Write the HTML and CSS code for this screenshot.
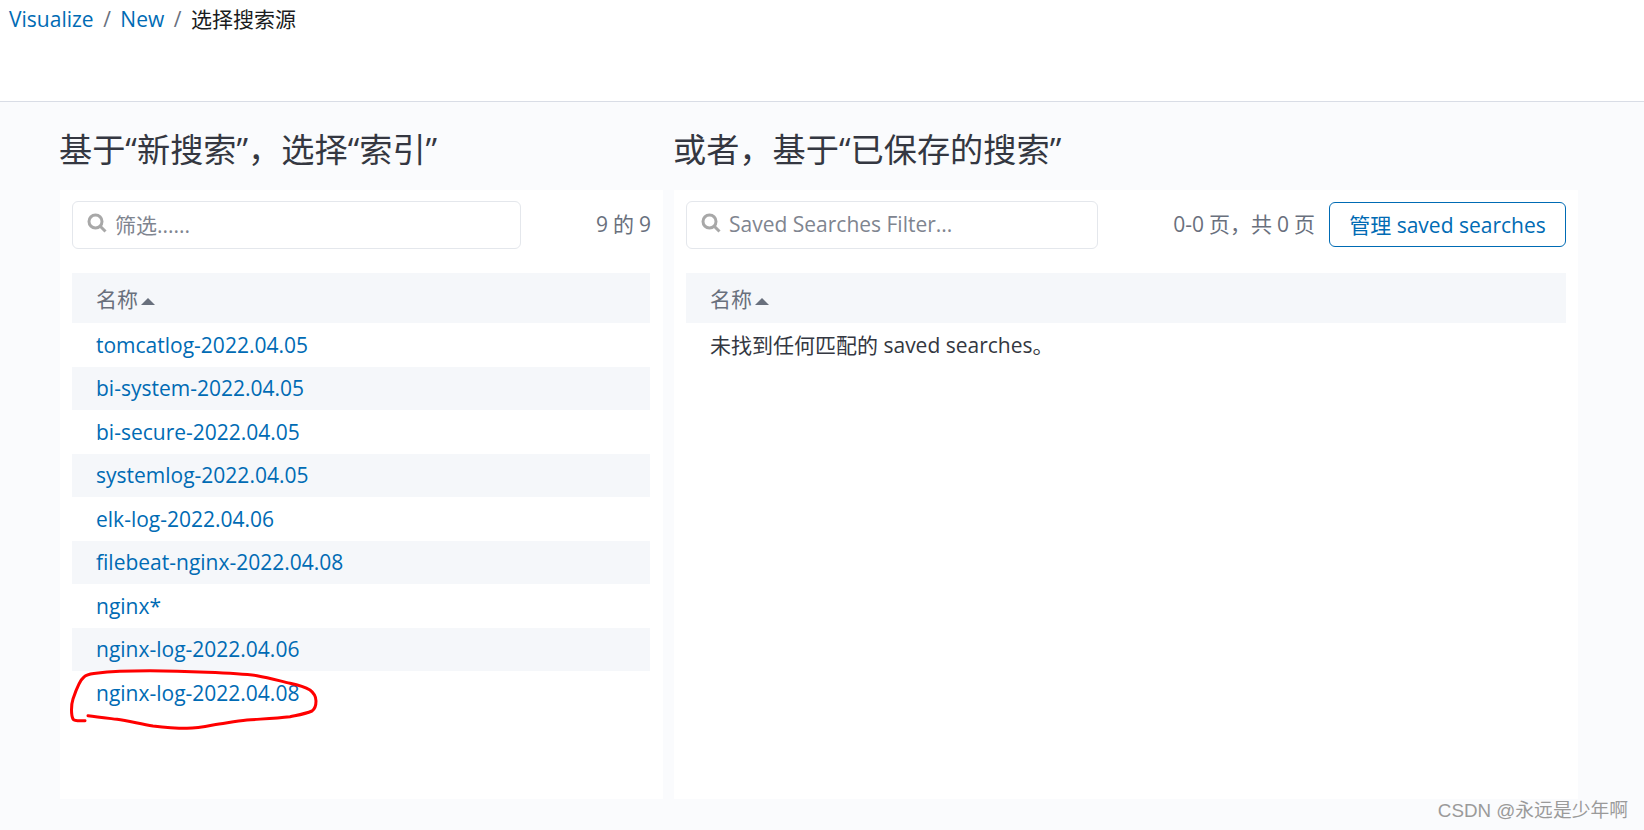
FILE: index.html

```html
<!DOCTYPE html>
<html lang="zh">
<head>
    <meta charset="UTF-8">
    <title>选择搜索源</title>
    <link rel="stylesheet" href="styles.css">
</head>
<body>
    <header class="top-bar">
        <nav class="breadcrumbs">
            <a href="#">Visualize</a>
            <span class="sep">/</span>
            <a href="#">New</a>
            <span class="sep">/</span>
            <span class="current">选择搜索源</span>
        </nav>
    </header>

    <main class="columns">
        <section class="col col-left">
            <h2>基于“新搜索”，选择“索引”</h2>
            <div class="panel">
                <div class="toolbar">
                    <label class="search search-left">
                        <svg class="search-icon" viewBox="0 0 20 20"><circle cx="8.5" cy="8.5" r="6.5"/><path d="M13.5 13.5 L18.5 18.5"/></svg>
                        <span class="placeholder">筛选......</span>
                    </label>
                    <span class="count count-left">9 的 9</span>
                </div>
                <table class="list">
                    <thead>
                        <tr><th>名称<span class="sort-up"></span></th></tr>
                    </thead>
                    <tbody>
                        <tr><td><a href="#">tomcatlog-2022.04.05</a></td></tr>
                        <tr><td><a href="#">bi-system-2022.04.05</a></td></tr>
                        <tr><td><a href="#">bi-secure-2022.04.05</a></td></tr>
                        <tr><td><a href="#">systemlog-2022.04.05</a></td></tr>
                        <tr><td><a href="#">elk-log-2022.04.06</a></td></tr>
                        <tr><td><a href="#">filebeat-nginx-2022.04.08</a></td></tr>
                        <tr><td><a href="#">nginx*</a></td></tr>
                        <tr><td><a href="#">nginx-log-2022.04.06</a></td></tr>
                        <tr><td><a href="#">nginx-log-2022.04.08</a></td></tr>
                    </tbody>
                </table>
            </div>
        </section>

        <section class="col col-right">
            <h2>或者，基于“已保存的搜索”</h2>
            <div class="panel">
                <div class="toolbar">
                    <label class="search search-right">
                        <svg class="search-icon" viewBox="0 0 20 20"><circle cx="8.5" cy="8.5" r="6.5"/><path d="M13.5 13.5 L18.5 18.5"/></svg>
                        <span class="placeholder">Saved Searches Filter...</span>
                    </label>
                    <span class="count pager">0-0 页，共 0 页</span>
                    <button class="btn">管理 saved searches</button>
                </div>
                <table class="list">
                    <thead>
                        <tr><th>名称<span class="sort-up"></span></th></tr>
                    </thead>
                    <tbody>
                        <tr class="empty"><td>未找到任何匹配的 saved searches。</td></tr>
                    </tbody>
                </table>
            </div>
        </section>
    </main>

    <!-- hand drawn red mark over the last row -->
    <svg class="scribble" viewBox="0 0 1644 830">
        <path d="M85 720.7 C80 721 74 721 73 719 C71 715 71 705 73 699 C76 690 80 680 84 677 C87 674 90 674 96 673.2 C115 671 130 670.8 150 670.8 C175 671 195 671.8 207 672.3 C225 673 245 674 257 675.7 C270 678 280 681 290 683.3 C298 685 305 687 310 690 C314 693 316 697 316 701 C316 706 315 709 312 711 C305 714 298 715 290 716.7 C275 718.5 260 719 247 720 C235 721 225 723.5 213 725 C203 727 195 728.3 187 728.3 C175 728.3 165 727.5 153 726 C140 724 128 720.5 117 719.3 C106 718 97 717 88 715.7"/>
    </svg>

    <div class="watermark">CSDN @永远是少年啊</div>
</body>
</html>
```

FILE: styles.css

```css
* {
    box-sizing: border-box;
}

html, body {
    height: 100%;
}

body {
    margin: 0;
    background: #fafbfd;
    font-family: 'Open Sans', 'Noto Sans CJK SC', sans-serif;
    font-size: 21px;
    color: #343741;
    overflow: hidden;
}

a {
    color: #006bb4;
    text-decoration: none;
}

.top-bar {
    height: 102px;
    padding: 4px 9px 0;
    background: #fff;
    border-bottom: 1.5px solid #d9dde6;
}

.breadcrumbs {
    display: flex;
    gap: 9.5px;
    line-height: 30px;
}

.breadcrumbs .sep {
    color: #69707d;
}

.breadcrumbs .current {
    color: #1a1c21;
}

.columns {
    display: flex;
    gap: 11px;
    padding-left: 60px;
}

.col-left {
    width: 603px;
}

.col-right {
    width: 904px;
}

h2 {
    margin: 0 0 0 -1px;
    height: 88px;
    padding-top: 25px;
    font-size: 33.2px;
    font-weight: 400;
    line-height: 46px;
    color: #343741;
}

.panel {
    height: 609px;
    padding: 11px 12px;
    background: #fff;
}

.col-left .panel {
    padding-right: 13px;
}

.toolbar {
    display: flex;
    align-items: center;
    height: 48px;
}

.search {
    display: flex;
    align-items: center;
    gap: 8px;
    height: 48px;
    padding-left: 14px;
    background: #fff;
    border: 1.5px solid #e4e7ec;
    border-radius: 6px;
}

.search-left {
    width: 449px;
}

.search-right {
    width: 412px;
}

.search-icon {
    width: 20px;
    height: 20px;
    margin-top: -5px;
    fill: none;
    stroke: #a8a8a8;
    stroke-width: 3;
}

.placeholder {
    margin-bottom: 2px;
    color: #7f8590;
}

.count {
    margin-left: auto;
    margin-bottom: 4px;
    color: #69707d;
    word-spacing: -0.5px;
}

.count-left {
    margin-right: -1px;
}

.pager {
    margin-right: 14px;
}

.btn {
    height: 45px;
    width: 237px;
    padding: 0;
    margin-bottom: 2px;
    background: #fff;
    border: 1.5px solid #006bb4;
    border-radius: 6px;
    color: #006bb4;
    font: inherit;
}

.list {
    width: 100%;
    margin-top: 24px;
    border-collapse: collapse;
}

.list th {
    height: 50px;
    padding: 0 0 0 24px;
    background: #f5f7fa;
    color: #69707d;
    font-weight: 400;
    text-align: left;
}

.list td {
    height: 43.5px;
    padding: 0 0 0 24px;
    line-height: 30px;
}

.list tbody tr:nth-child(even) td {
    background: #f5f7fa;
}

.list .empty td {
    color: #343741;
}

.sort-up {
    display: inline-block;
    margin-left: 3px;
    vertical-align: 2px;
    border-left: 7px solid transparent;
    border-right: 7px solid transparent;
    border-bottom: 7.5px solid #69707d;
}

.scribble {
    position: absolute;
    left: 0;
    top: 0;
    width: 1644px;
    height: 830px;
    fill: none;
    stroke: #f00;
    stroke-width: 3;
    stroke-linecap: round;
    pointer-events: none;
}

.watermark {
    position: absolute;
    right: 16px;
    top: 799px;
    font-family: 'Liberation Sans', 'Noto Sans CJK SC', sans-serif;
    font-size: 18.8px;
    line-height: 24px;
    color: #9a9a9a;
}
```
